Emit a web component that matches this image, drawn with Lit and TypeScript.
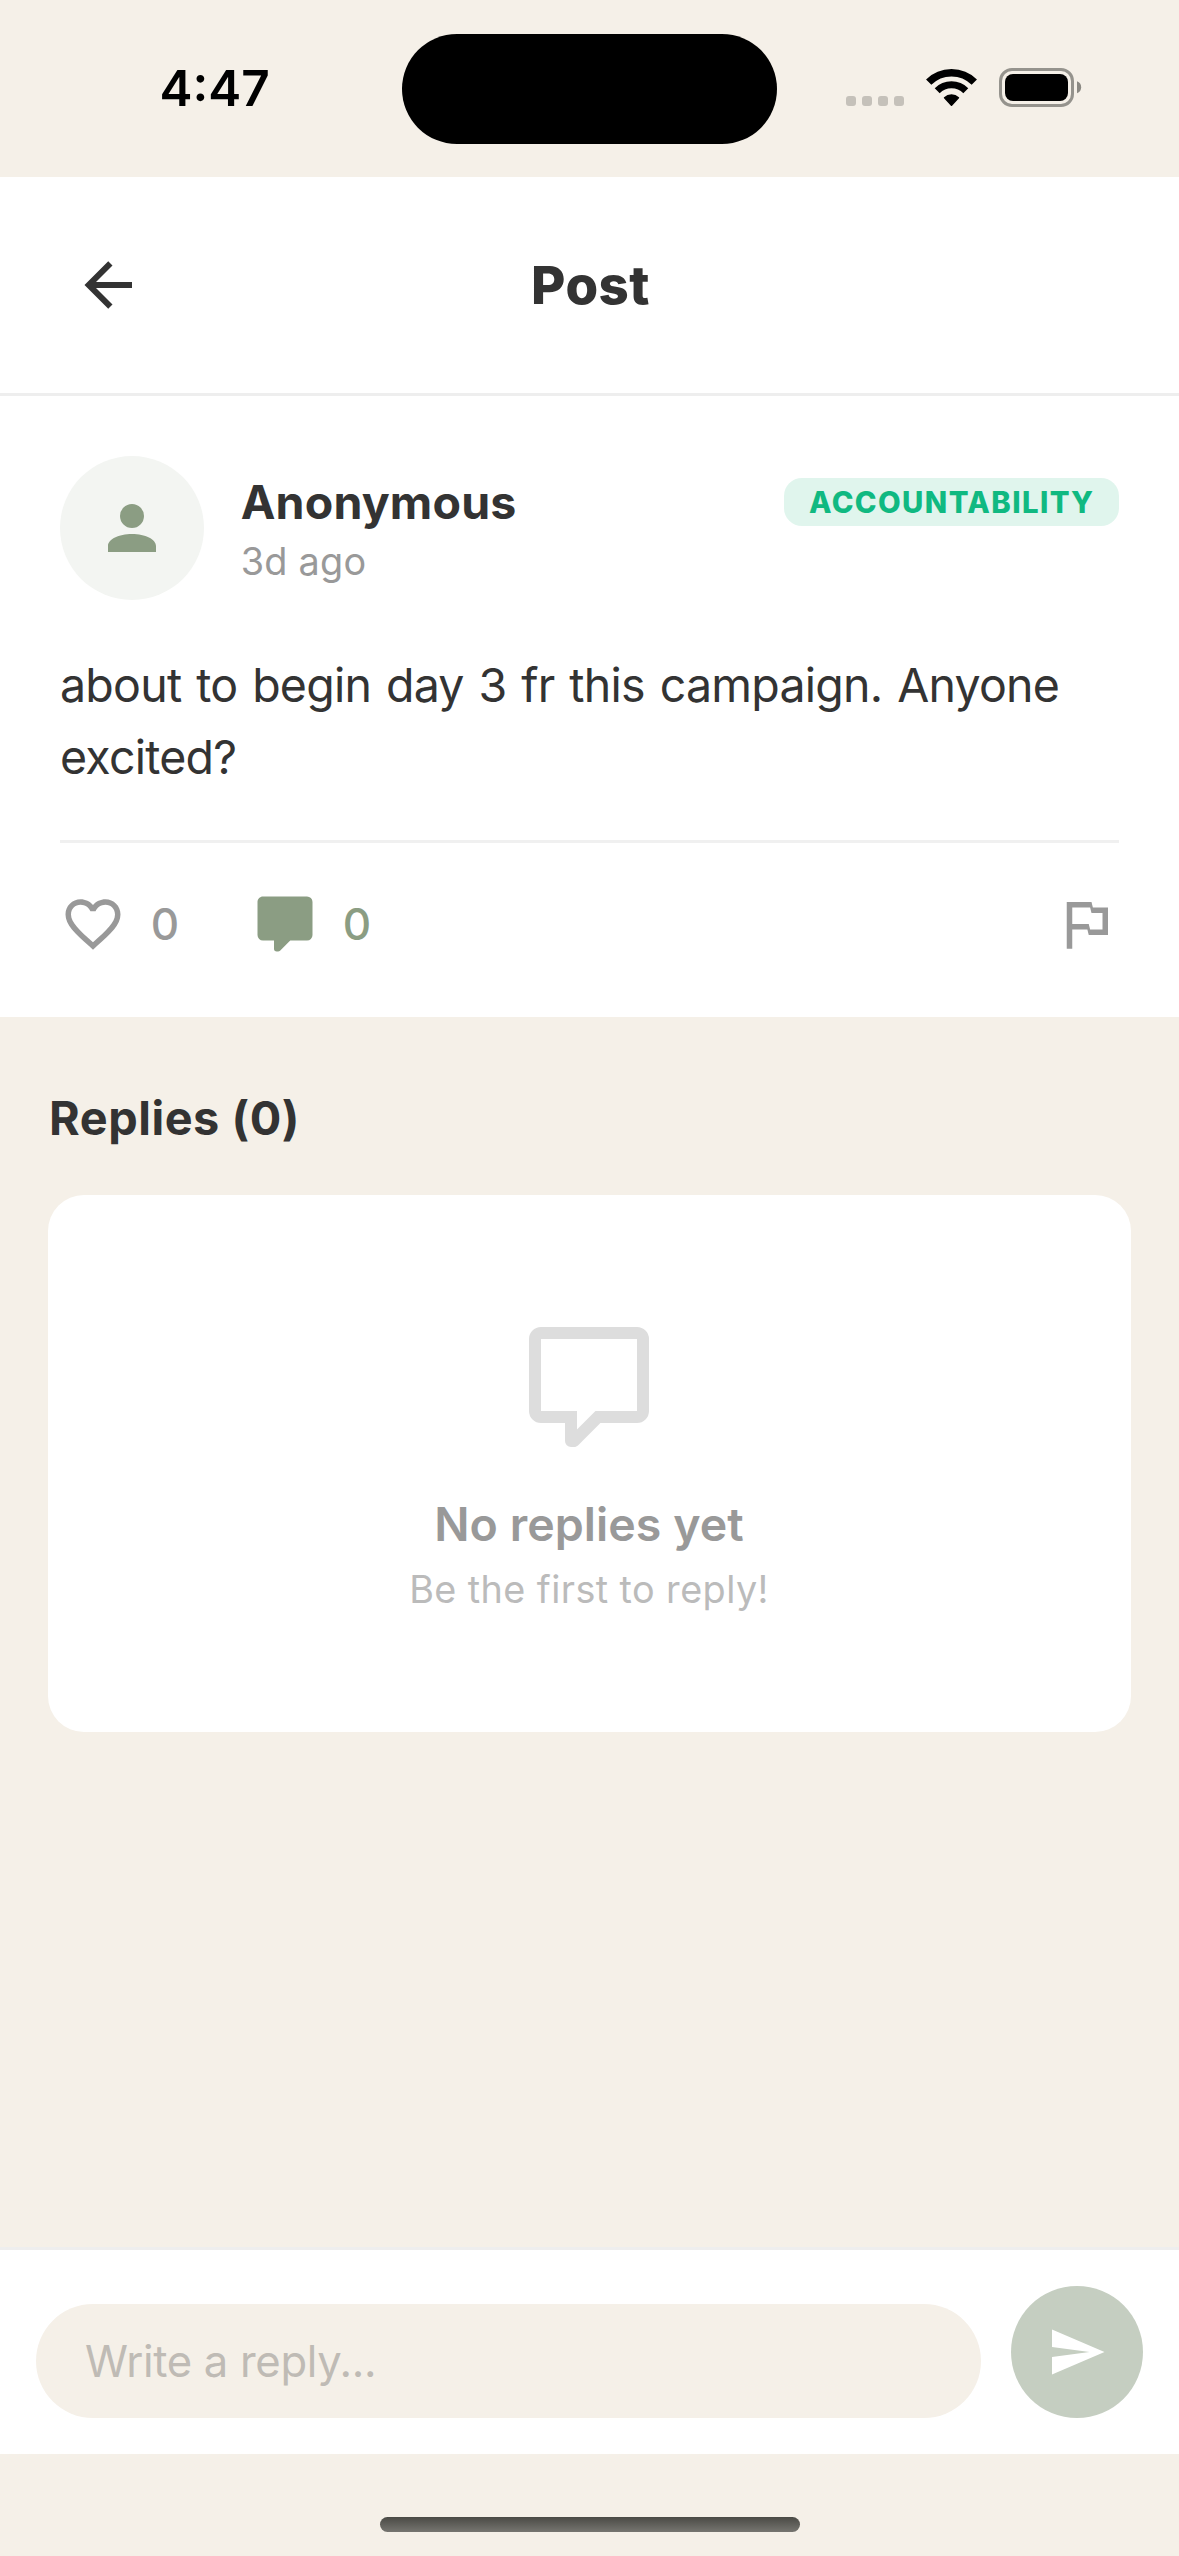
import { LitElement, html, css, svg, nothing } from "lit";
import { customElement, property } from "lit/decorators.js";

const ICONS: Record<string, string> = {
  back: "M20,11V13H8L13.5,18.5L12.08,19.92L4.16,12L12.08,4.08L13.5,5.5L8,11H20Z",
  account:
    "M12,4A4,4 0 0,1 16,8A4,4 0 0,1 12,12A4,4 0 0,1 8,8A4,4 0 0,1 12,4M12,14C16.42,14 20,15.79 20,18V20H4V18C4,15.79 7.58,14 12,14Z",
  heart:
    "M12.1,18.55L12,18.65L11.89,18.55C7.14,14.24 4,11.39 4,8.5C4,6.5 5.5,5 7.5,5C9.04,5 10.54,6 11.07,7.36H12.93C13.46,6 14.96,5 16.5,5C18.5,5 20,6.5 20,8.5C20,11.39 16.86,14.24 12.1,18.55M16.5,3C14.76,3 13.09,3.81 12,5.08C10.91,3.81 9.24,3 7.5,3C4.42,3 2,5.41 2,8.5C2,12.27 5.4,15.36 10.55,20.03L12,21.35L13.45,20.03C18.6,15.36 22,12.27 22,8.5C22,5.41 19.58,3 16.5,3Z",
  comment:
    "M9,22A1,1 0 0,1 8,21V18H4A2,2 0 0,1 2,16V4C2,2.89 2.9,2 4,2H20A2,2 0 0,1 22,4V16A2,2 0 0,1 20,18H13.9L10.2,21.71C10,21.9 9.75,22 9.5,22H9Z",
  commentOutline:
    "M9,22A1,1 0 0,1 8,21V18H4A2,2 0 0,1 2,16V4C2,2.89 2.9,2 4,2H20A2,2 0 0,1 22,4V16A2,2 0 0,1 20,18H13.9L10.2,21.71C10,21.9 9.75,22 9.5,22H9M10,16V19.08L13.08,16H20V4H4V16H10Z",
  flag: "M14.5,6H20V16H13L12.5,14H7V21H5V4H14L14.5,6M7,6V12H13L13.5,14H18V8H14L13.5,6H7Z",
  send: "M2,21L23,12L2,3V10L17,12L2,14V21Z",
};

@customElement("app-icon")
export class AppIcon extends LitElement {
  static styles = css`
    :host {
      display: block;
      flex: none;
    }
    .glyph {
      display: block;
      width: 100%;
      height: 100%;
      fill: currentColor;
      fill-rule: evenodd;
    }
  `;
  @property() name = "";
  render() {
    const d = ICONS[this.name];
    return html`<svg class="glyph" viewBox="0 0 24 24">${d ? svg`<path d=${d} />` : nothing}</svg>`;
  }
}

@customElement("status-bar")
export class StatusBar extends LitElement {
  static styles = css`
    :host {
      display: grid;
      grid-template-columns: 402px 375px 402px;
      height: 177px;
      background: #f5f0e8;
    }
    .time {
      align-self: center;
      padding: 0 0 1px 159.5px;
      font-size: 49.5px;
      font-weight: 600;
      line-height: 60px;
      color: #000;
    }
    .island {
      height: 110.5px;
      margin-top: 33.5px;
      border-radius: 56px;
      background: #000;
    }
    .right {
      display: flex;
      gap: 22px;
      padding: 68px 0 0 69px;
    }
    .dots {
      display: flex;
      gap: 6px;
      padding-top: 28px;
    }
    .dot {
      width: 10px;
      height: 10px;
      border-radius: 3px;
      background: #c5c1ba;
    }
    .wifi {
      width: 51px;
      height: 39px;
    }
    .battery {
      width: 84px;
      height: 39px;
    }
  `;
  render() {
    return html`
      <div class="time">4:47</div>
      <div class="island"></div>
      <div class="right">
        <div class="dots">${[0, 1, 2, 3].map(() => html`<div class="dot"></div>`)}</div>
        <svg class="wifi" viewBox="0 0 51 39">
          <path d="M2.7 14.2A32.25 32.25 0 0 1 48.3 14.2" fill="none" stroke="#000" stroke-width="7.5" />
          <path d="M11.2 22.7A20.25 20.25 0 0 1 39.8 22.7" fill="none" stroke="#000" stroke-width="7" />
          <path
            d="M25.5 37.2L18.6 29.8A10.2 10.2 0 0 1 32.4 29.8Z"
            stroke="#000"
            stroke-width="1.6"
            stroke-linejoin="round"
          />
        </svg>
        <svg class="battery" viewBox="0 0 84 39">
          <rect x="1.5" y="1.5" width="72" height="36" rx="11.5" fill="none" stroke="#95938d" stroke-width="3" />
          <rect x="6" y="6" width="63" height="27" rx="8" />
          <path d="M78 13.2A6.4 6.4 0 0 1 78 25.2Z" fill="#8b8983" />
        </svg>
      </div>
    `;
  }
}

@customElement("post-card")
export class PostCard extends LitElement {
  static styles = css`
    :host {
      display: block;
      flex: none;
      padding: 60px 60px 0;
      height: 621px;
      box-sizing: border-box;
      background: #fff;
      color: #333;
    }
    .head {
      display: flex;
      align-items: flex-start;
      height: 144px;
    }
    .avatar {
      display: grid;
      place-items: center;
      width: 144px;
      height: 144px;
      border-radius: 50%;
      background: #f3f5f2;
      color: #8b9d83;
    }
    .avatar-icon {
      width: 72px;
      height: 72px;
    }
    .who {
      flex: 1;
      padding: 17px 0 0 36.7px;
    }
    .name {
      font-size: 46.5px;
      font-weight: 700;
      line-height: 58px;
      letter-spacing: 0.17px;
    }
    .when {
      margin-top: 7px;
      font-size: 37.8px;
      line-height: 47px;
      letter-spacing: 0.24px;
      color: #999;
    }
    .tag {
      box-sizing: border-box;
      width: 335px;
      height: 48px;
      margin-top: 22px;
      padding-left: 25px;
      border-radius: 18px;
      background: #e0f5ed;
      color: #10b981;
      font-size: 29.3px;
      font-weight: 800;
      line-height: 49px;
      letter-spacing: 1.42px;
      white-space: nowrap;
    }
    .body {
      margin: 0;
      padding: 49px 0 47px;
      font-size: 46.5px;
      line-height: 72px;
      letter-spacing: -0.76px;
      word-spacing: 2.5px;
    }
    .actions {
      display: flex;
      align-items: center;
      padding-top: 48px;
      border-top: 3px solid #f0f0f0;
    }
    .action {
      display: flex;
      align-items: center;
      gap: 24.7px;
      width: 192px;
      color: #999;
    }
    .active {
      color: #8b9d83;
    }
    .action-icon {
      width: 66px;
      height: 66px;
    }
    .count {
      padding-top: 1px;
      font-size: 44px;
      font-weight: 550;
      line-height: 65px;
    }
    .flag {
      width: 66px;
      height: 66px;
      margin-left: auto;
      color: #999;
    }
  `;
  render() {
    return html`
      <div class="head">
        <div class="avatar"><app-icon class="avatar-icon" name="account"></app-icon></div>
        <div class="who">
          <div class="name">Anonymous</div>
          <div class="when">3d ago</div>
        </div>
        <div class="tag">ACCOUNTABILITY</div>
      </div>
      <p class="body">about to begin day 3 fr this campaign. Anyone excited?</p>
      <div class="actions">
        <div class="action">
          <app-icon class="action-icon" name="heart"></app-icon><span class="count">0</span>
        </div>
        <div class="action active">
          <app-icon class="action-icon" name="comment"></app-icon><span class="count">0</span>
        </div>
        <app-icon class="flag" name="flag"></app-icon>
      </div>
    `;
  }
}

@customElement("app-root")
export class AppRoot extends LitElement {
  static styles = css`
    :host {
      display: flex;
      flex-direction: column;
      width: 1179px;
      height: 2556px;
      overflow: hidden;
      background: #f5f0e8;
      color: #333;
      font-family: Inter, "Liberation Sans", sans-serif;
    }
    .header {
      display: grid;
      grid-template-columns: 72px 1fr 72px;
      align-items: center;
      height: 216px;
      padding: 0 72px;
      border-bottom: 3px solid #eee;
      background: #fff;
    }
    .back {
      width: 72px;
      height: 72px;
    }
    .title {
      padding-left: 2px;
      text-align: center;
      font-size: 52.8px;
      font-weight: 800;
      line-height: 64px;
      letter-spacing: 0.5px;
    }
    .replies {
      flex: 1;
      padding: 73px 48px 0;
    }
    .heading {
      padding-left: 1px;
      font-size: 46.8px;
      font-weight: 700;
      line-height: 56px;
      letter-spacing: 0.55px;
    }
    .empty {
      display: flex;
      flex-direction: column;
      align-items: center;
      box-sizing: border-box;
      height: 537px;
      margin-top: 49px;
      padding: 120px 1px 0 0;
      border-radius: 36px;
      background: #fff;
    }
    .empty-icon {
      width: 144px;
      height: 144px;
      color: #ddd;
    }
    .empty-title {
      margin-top: 37px;
      font-size: 46.5px;
      font-weight: 600;
      line-height: 56px;
      letter-spacing: 0.05px;
      color: #999;
    }
    .empty-hint {
      margin-top: 14px;
      font-size: 37.8px;
      line-height: 46px;
      letter-spacing: 0.41px;
      color: #bbb;
    }
    .composer {
      display: flex;
      align-items: flex-end;
      justify-content: space-between;
      box-sizing: border-box;
      height: 207px;
      padding: 0 36px 36px;
      border-top: 3px solid #eee;
      background: #fff;
    }
    .field {
      box-sizing: border-box;
      width: 945px;
      height: 114px;
      padding-left: 49px;
      border-radius: 57px;
      background: #f5f0e8;
      color: #bfbbb5;
      font-size: 43.6px;
      line-height: 115px;
      letter-spacing: -0.31px;
    }
    .send {
      display: grid;
      place-items: center;
      width: 132px;
      height: 132px;
      border-radius: 50%;
      background: #c5cec1;
      color: #fff;
    }
    .send-icon {
      width: 60px;
      height: 60px;
    }
    .home {
      display: flex;
      justify-content: center;
      height: 102px;
    }
    .home-bar {
      width: 420px;
      height: 15px;
      margin-top: 63px;
      border-radius: 8px;
      background: linear-gradient(#4a4a45, #767570);
    }
  `;
  render() {
    return html`
      <status-bar></status-bar>
      <div class="header">
        <app-icon class="back" name="back"></app-icon>
        <div class="title">Post</div>
      </div>
      <post-card></post-card>
      <div class="replies">
        <div class="heading">Replies (0)</div>
        <div class="empty">
          <app-icon class="empty-icon" name="commentOutline"></app-icon>
          <div class="empty-title">No replies yet</div>
          <div class="empty-hint">Be the first to reply!</div>
        </div>
      </div>
      <div class="composer">
        <div class="field">Write a reply...</div>
        <div class="send"><app-icon class="send-icon" name="send"></app-icon></div>
      </div>
      <div class="home"><div class="home-bar"></div></div>
    `;
  }
}
